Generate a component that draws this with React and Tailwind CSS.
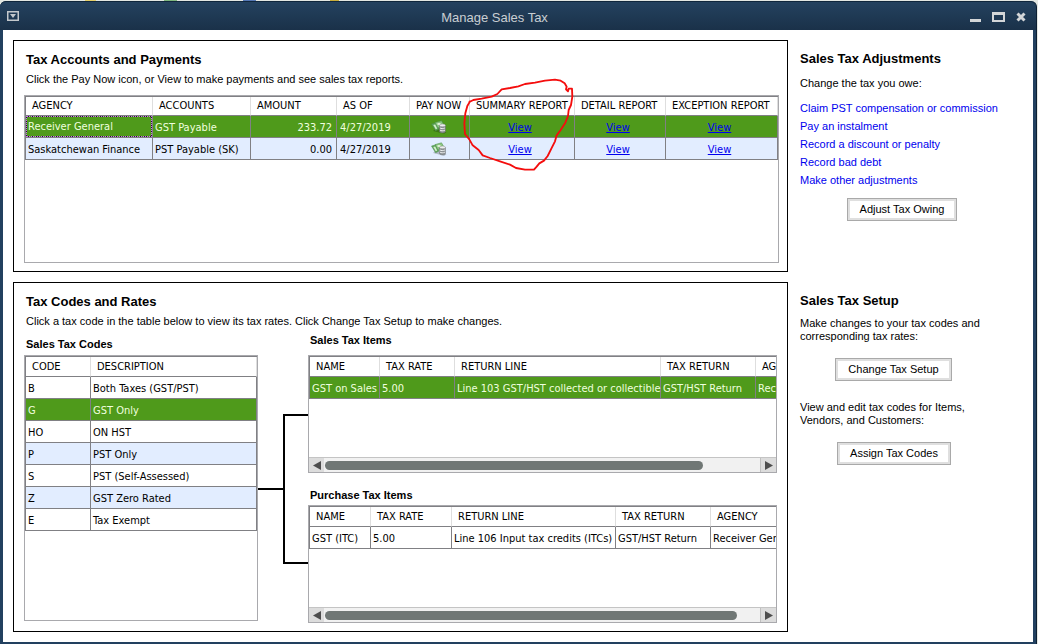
import React from 'react';

const agencies = [
    { agency: 'Receiver General', account: 'GST Payable', amount: '233.72', asOf: '4/27/2019', selected: true },
    { agency: 'Saskatchewan Finance', account: 'PST Payable (SK)', amount: '0.00', asOf: '4/27/2019', selected: false },
];

const taxCodes = [
    { code: 'B', description: 'Both Taxes (GST/PST)' },
    { code: 'G', description: 'GST Only', selected: true },
    { code: 'HO', description: 'ON HST' },
    { code: 'P', description: 'PST Only', shaded: true },
    { code: 'S', description: 'PST (Self-Assessed)' },
    { code: 'Z', description: 'GST Zero Rated', shaded: true },
    { code: 'E', description: 'Tax Exempt' },
];

const adjustments = [
    'Claim PST compensation or commission',
    'Pay an instalment',
    'Record a discount or penalty',
    'Record bad debt',
    'Make other adjustments',
];

const gridFont = "font-['DejaVu_Sans_Condensed','DejaVu_Sans',sans-serif]";

const rowColor = (selected, shaded) => {
    if (selected) return 'bg-[#4f9a1b] text-[#efffdf]';
    return shaded ? 'bg-[#e2edff]' : 'bg-white';
};

const Th = ({ children, tall }) => (
    <th
        className={`${tall ? 'h-5' : 'h-[19px]'} border-r border-b border-r-[#dedede] border-b-[#808084] bg-white p-0 pl-1.5 text-left font-normal`}
    >
        {children}
    </th>
);

const Td = ({ children, className = 'pt-0.5 pl-0.5' }) => (
    <td className={`h-[22px] border-r border-b border-[#808084] p-0 ${className}`}>{children}</td>
);

const Grid = ({ label, widths, fill, children }) => (
    <table
        aria-label={label}
        className={`${gridFont} ${fill ? 'w-full' : 'w-[560px]'} table-fixed border-separate border-spacing-0 border-t border-l border-[#808084] text-[11px] leading-4 whitespace-nowrap`}
    >
        <colgroup>
            {widths.map((width, i) => (
                <col key={i} style={{ width }} />
            ))}
            <col />
        </colgroup>
        {children}
    </table>
);

const PayIcon = () => (
    <svg width="16" height="14" viewBox="0 0 16 14" aria-hidden="true">
        <path d="M2 11 13 13.8 15.5 12.5 5 8z" fill="#000" opacity="0.22" />
        <path d="M0.5 4 5 2.8 8 9 4.6 10.8z" fill="#5fa55a" stroke="#4b8a4a" strokeWidth="0.5" />
        <path d="M4 2.6 10.5 0.8 13 5 7 8z" fill="#8cc681" stroke="#4b8a4a" strokeWidth="0.5" />
        <path d="M2.3 5 4.2 4.5 6.2 8.6 4.8 9.3z" fill="#d5edcd" />
        <ellipse cx="8" cy="4" rx="1.8" ry="1.1" fill="#e3f3dc" />
        <path d="M8.5 5.5v6c0 1.9 6 1.9 6 0v-6z" fill="#8b8f92" stroke="#6a6e70" strokeWidth="0.4" />
        <ellipse cx="11.5" cy="5.4" rx="3" ry="1.3" fill="#eceeee" stroke="#7b7f81" strokeWidth="0.4" />
        <path d="M8.9 7.9c1 .9 3.4 .9 5 .1M8.9 10.1c1 .9 3.4 .9 5 .1" fill="none" stroke="#eceeee" strokeWidth="1" />
    </svg>
);

const ScrollBar = ({ thumb }) => (
    <div className="flex h-[15px] shrink-0 border-t border-[#c4c4c4] bg-[#dcdcdc]">
        <button type="button" aria-label="Scroll left" className="flex w-[15px] items-center justify-center">
            <svg width="8" height="9" viewBox="0 0 8 9"><path d="M8 0v9L0 4.5z" fill="#4d4d4d" /></svg>
        </button>
        <div className="flex flex-1 items-center border-r border-[#c0c0c0] bg-[#f1f1f1] px-px">
            <div className="h-[9px] rounded-full bg-[#707775]" style={{ width: thumb }} />
        </div>
        <button type="button" aria-label="Scroll right" className="flex w-[15px] items-center justify-center">
            <svg width="8" height="9" viewBox="0 0 8 9"><path d="M0 0v9l8-4.5z" fill="#4d4d4d" /></svg>
        </button>
    </div>
);

const ItemsBox = ({ label, widths, row, selected, thumb }) => (
    <div className="flex h-[118px] flex-col overflow-hidden border border-[#a9a9ad]">
        <div className="flex-1 overflow-hidden">
            <Grid label={label} widths={widths}>
                <thead>
                    <tr>
                        <Th tall>NAME</Th>
                        <Th tall>TAX RATE</Th>
                        <Th tall>RETURN LINE</Th>
                        <Th tall>TAX RETURN</Th>
                        <Th tall>AGENCY</Th>
                    </tr>
                </thead>
                <tbody>
                    <tr className={rowColor(selected)}>
                        {row.map((cell) => (
                            <Td key={cell}>{cell}</Td>
                        ))}
                    </tr>
                </tbody>
            </Grid>
        </div>
        <ScrollBar thumb={thumb} />
    </div>
);

const PushButton = ({ children, className }) => (
    <button
        type="button"
        className={`${className} h-[23px] border border-[#a9a9a9] bg-white pb-0.5 text-[11px] leading-4 inset-ring-2 inset-ring-[#dfdfdf]`}
    >
        {children}
    </button>
);

const TitleBar = () => (
    <header className="flex h-[29px] items-center rounded-t-md border-t border-[#10273c] bg-linear-to-b from-[#24425f] to-[#1a3149] pr-2.5 pl-[7px] text-[#c9ced2]">
        <button type="button" aria-label="Window menu">
            <svg width="12" height="10" viewBox="0 0 12 10">
                <rect x="0.75" y="0.75" width="10.5" height="8.5" fill="none" stroke="#c3c8cc" strokeWidth="1.5" />
                <path d="M3 3h6L6 7z" fill="#c3c8cc" />
            </svg>
        </button>
        <h1 className="flex-1 pt-1 text-center text-[13px] leading-5">Manage Sales Tax</h1>
        <div className="flex items-center gap-2.5 pt-0.5">
            <button type="button" aria-label="Minimize">
                <svg width="12" height="10" viewBox="0 0 12 10"><path d="M0 7h11v3H0z" fill="#d3d6d8" /></svg>
            </button>
            <button type="button" aria-label="Maximize">
                <svg width="14" height="10" viewBox="0 0 14 10">
                    <path d="M0 0h13v10H0zM2 3v5h9V3z" fill="#d3d6d8" fillRule="evenodd" />
                </svg>
            </button>
            <button type="button" aria-label="Close">
                <svg width="10" height="10" viewBox="0 0 10 10">
                    <path d="M1.5 1.5 8.5 8.5M8.5 1.5 1.5 8.5" stroke="#d3d6d8" strokeWidth="3" />
                </svg>
            </button>
        </div>
    </header>
);

const AccountsPanel = () => (
    <section className="border border-black pt-[9px] pr-2 pb-2 pl-2.5">
        <h2 className="pl-0.5 text-[13px] leading-5 font-bold">Tax Accounts and Payments</h2>
        <p className="mt-px pl-0.5 text-[11px] leading-4">
            Click the Pay Now icon, or View to make payments and see sales tax reports.
        </p>
        <div className="relative mt-2 h-[168px] border border-[#a9a9ad]">
            <Grid label="Tax accounts" widths={[127, 98, 86, 73, 60, 105, 91]} fill>
                <thead>
                    <tr>
                        <Th>AGENCY</Th>
                        <Th>ACCOUNTS</Th>
                        <Th>AMOUNT</Th>
                        <Th>AS OF</Th>
                        <Th>PAY NOW</Th>
                        <Th>SUMMARY REPORT</Th>
                        <Th>DETAIL REPORT</Th>
                        <Th>EXCEPTION REPORT</Th>
                    </tr>
                </thead>
                <tbody>
                    {agencies.map((row) => (
                        <tr key={row.agency} className={rowColor(row.selected, true)}>
                            {row.selected ? (
                                <Td className="">
                                    {/* focus rectangle */}
                                    <div className="h-[21px] border border-dashed border-[#2c1038] pt-0.5 pl-px outline-1 -outline-offset-1 outline-dotted outline-[#c77be6]">
                                        {row.agency}
                                    </div>
                                </Td>
                            ) : (
                                <Td>{row.agency}</Td>
                            )}
                            <Td>{row.account}</Td>
                            <Td className="pt-0.5 pr-1 text-right">{row.amount}</Td>
                            <Td className="pt-0.5 pl-[3px]">{row.asOf}</Td>
                            <Td className="pr-0.5">
                                <button type="button" aria-label={`Pay ${row.agency}`} className="mx-auto block">
                                    <PayIcon />
                                </button>
                            </Td>
                            {['summary', 'detail', 'exception'].map((report) => (
                                <Td key={report} className="pt-0.5 pr-1 text-center">
                                    <a href={`#${report}`} className="text-[#0000ee] underline">View</a>
                                </Td>
                            ))}
                        </tr>
                    ))}
                </tbody>
            </Grid>

            {/* Hand-drawn circle round the summary report links */}
            <svg className="pointer-events-none absolute -top-[26px] left-[385px]" width="180" height="110" viewBox="0 0 540 330" aria-hidden="true">
                <path
                    d="M178 96 190 90 215 86 245 80 262 72 275 58 300 54 325 49 345 42 375 38 405 32 435 29 452 32 464 40 470 50 468 58 474 64 476 56 486 56 487 80 483 105 476 120 474 138 466 158 452 180 440 196 435 214 424 236 413 258 402 272 388 280 380 290 372 299 345 299 318 294 300 284 270 274 240 264 218 256 206 240 188 226 178 208 165 192 163 160 166 130 172 108 180 94"
                    fill="none"
                    stroke="#f40d0d"
                    strokeWidth="5.5"
                    strokeLinecap="round"
                    strokeLinejoin="round"
                />
            </svg>
        </div>
    </section>
);

const CodesPanel = () => (
    <section className="border border-black pt-[9px] pr-2.5 pb-2 pl-2.5">
        <h2 className="pl-0.5 text-[13px] leading-5 font-bold">Tax Codes and Rates</h2>
        <p className="mt-px pl-0.5 text-[11px] leading-4">
            Click a tax code in the table below to view its tax rates. Click Change Tax Setup to make changes.
        </p>

        <div className="flex">
            <div className="w-[234px] shrink-0 pt-[7px]">
                <h3 className="mb-[3px] pl-0.5 text-[11px] leading-4 font-bold">Sales Tax Codes</h3>
                <div className="h-[266px] border border-[#a9a9ad]">
                    <Grid label="Sales Tax Codes" widths={[65]} fill>
                        <thead>
                            <tr>
                                <Th tall>CODE</Th>
                                <Th tall>DESCRIPTION</Th>
                            </tr>
                        </thead>
                        <tbody>
                            {taxCodes.map((row) => (
                                <tr key={row.code} className={rowColor(row.selected, row.shaded)}>
                                    <Td>{row.code}</Td>
                                    <Td>{row.description}</Td>
                                </tr>
                            ))}
                        </tbody>
                    </Grid>
                </div>
            </div>

            {/* Connector from the selected code to its items */}
            <div className="flex w-[50px] shrink-0 pt-[85px]">
                <div className="h-[76px] w-[25px] border-b-2 border-black" />
                <div className="h-[150px] flex-1 border-y-2 border-l-2 border-black" />
            </div>

            <div className="min-w-0 flex-1 pt-[3px]">
                <h3 className="mb-[7px] pl-0.5 text-[11px] leading-4 font-bold">Sales Tax Items</h3>
                <ItemsBox
                    label="Sales Tax Items"
                    widths={[70, 75, 206, 95]}
                    row={['GST on Sales', '5.00', 'Line 103 GST/HST collected or collectible', 'GST/HST Return', 'Receiver General']}
                    selected
                    thumb="87%"
                />
                <h3 className="mt-3.5 mb-0.5 pl-0.5 text-[11px] leading-4 font-bold">Purchase Tax Items</h3>
                <ItemsBox
                    label="Purchase Tax Items"
                    widths={[61, 81, 164, 95]}
                    row={['GST (ITC)', '5.00', 'Line 106 Input tax credits (ITCs)', 'GST/HST Return', 'Receiver General']}
                    thumb="95%"
                />
            </div>
        </div>
    </section>
);

const SideBar = () => (
    <aside className="w-[233px] shrink-0 pt-[9px] text-[11px]">
        <h2 className="text-[13px] leading-5 font-bold">Sales Tax Adjustments</h2>
        <p className="mt-1.5 leading-4">Change the tax you owe:</p>
        <ul className="mt-2 leading-[18px]">
            {adjustments.map((item) => (
                <li key={item}>
                    <a href="#adjust" className="text-[#0000ee]">{item}</a>
                </li>
            ))}
        </ul>
        <PushButton className="mt-[9px] ml-[47px] w-[110px]">Adjust Tax Owing</PushButton>

        <h2 className="mt-[70px] text-[13px] leading-5 font-bold">Sales Tax Setup</h2>
        <p className="mt-1.5 leading-[13px]">
            Make changes to your tax codes and<br />corresponding tax rates:
        </p>
        <PushButton className="mt-[15px] ml-[35px] w-[117px]">Change Tax Setup</PushButton>
        <p className="mt-5 leading-[13px]">
            View and edit tax codes for Items,<br />Vendors, and Customers:
        </p>
        <PushButton className="mt-[15px] ml-[37px] w-[114px]">Assign Tax Codes</PushButton>
    </aside>
);

const App = () => {
    return (
        <div className="flex min-h-screen flex-col bg-[#e3e7e2] pr-px font-['Liberation_Sans',Arial,sans-serif] text-black">
            {/* Sliver of the toolbar behind the window */}
            <div className="flex h-px">
                <div className="ml-[85px] w-[11px] bg-[#e5cf6a]" />
                <div className="ml-[68px] w-[13px] bg-[#7fb77f]" />
                <div className="ml-[66px] w-[13px] bg-[#5578b5]" />
                <div className="ml-[74px] w-[9px] bg-[#c9ad3c]" />
            </div>

            <div className="flex flex-1 flex-col rounded-t-md border-r border-[#0d1f33] bg-[#22405f]">
                <TitleBar />
                <main className="mx-[3px] mb-0.5 flex flex-1 items-start gap-3 bg-white py-2.5 pl-2.5">
                    <div className="flex min-w-0 flex-1 flex-col gap-2.5">
                        <AccountsPanel />
                        <CodesPanel />
                    </div>
                    <SideBar />
                </main>
            </div>
        </div>
    );
};

export default App;
